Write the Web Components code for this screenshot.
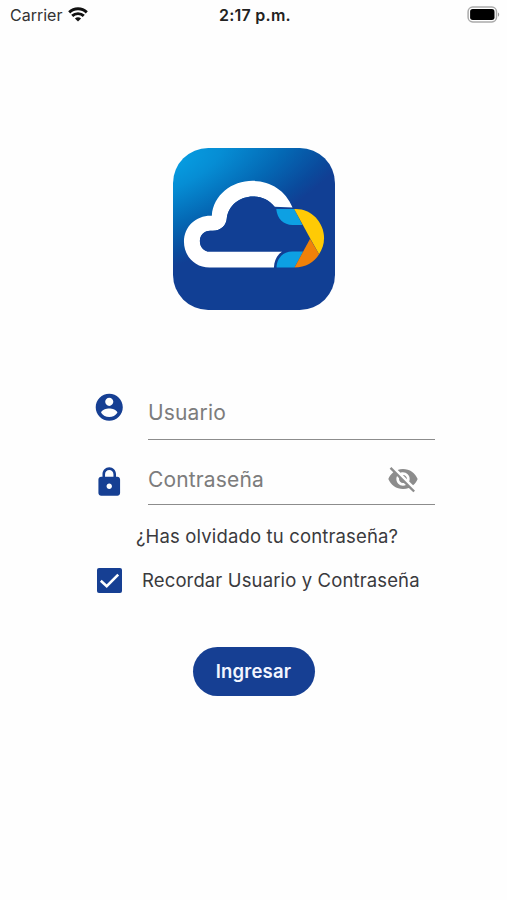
<!DOCTYPE html>
<html lang="es">
<head>
<meta charset="utf-8">
<title>Ingresar</title>
<style>
html,body{margin:0;height:100%;background:#fefefe}
body{font-family:Inter,"Liberation Sans",sans-serif;color:#3a3a3d}
</style>
</head>
<body>
<login-screen></login-screen>
<script>
const define = (name, html) => customElements.define(name, class extends HTMLElement {
  constructor() {
    super();
    this.attachShadow({ mode: 'open' }).innerHTML = html;
  }
});

define('status-bar', `
<style>
:host{display:grid;grid-template-columns:1fr auto 1fr;align-items:center;height:30px;padding:0 7px 0 10px;box-sizing:border-box;color:#222}
.left{display:flex;align-items:center;gap:6px;font-size:16px;letter-spacing:0;color:#333}
.left span,.time{margin-top:-1px}
.left svg{margin-top:-2px}
.time{font-size:16px;font-weight:600;letter-spacing:.25px}
.battery{justify-self:end;display:block;margin-top:-2px}
svg{display:block}
</style>
<div class="left"><span>Carrier</span>
<svg width="20" height="15" viewBox="0 0 20 15" fill="none" stroke="#111" stroke-width="2.9"><path d="M1.2 5.4C6.2.6 13.8.6 18.8 5.4"/><path d="M4.200 8.900C7.400 5.800 12.600 5.800 15.800 8.900"/><path d="M10 14.6 6.9 11.4C8.6 9.9 11.4 9.9 13.1 11.4Z" fill="#111" stroke="none"/></svg></div>
<div class="time">2:17 p.m.</div>
<svg class="battery" width="33" height="17" viewBox="0 0 33 17"><rect x="1.1" y="1.1" width="28.4" height="14.8" rx="4.6" fill="#fff" stroke="#aaa" stroke-width="1.5"/><rect x="3.1" y="3.1" width="24.4" height="10.8" rx="2.6" fill="#000"/><path d="M31 6.5c1.6.6 1.6 3.6 0 4.200Z" fill="#999"/></svg>`);

define('app-logo', `
<style>:host{display:block;width:162px;height:162px}svg{display:block}</style>
<svg width="162" height="162" viewBox="27 24 488 488" preserveAspectRatio="none">
<defs><radialGradient id="g" gradientUnits="userSpaceOnUse" cx="20" cy="70" r="340" gradientTransform="translate(20 70) rotate(-24) scale(2 .86) translate(-20 -70)"><stop offset="0" stop-color="#069ee2"/><stop offset=".25" stop-color="#068dd4"/><stop offset=".6" stop-color="#0468b4"/><stop offset=".88" stop-color="#0a4a9c"/><stop offset="1" stop-color="#113f94"/></radialGradient></defs>
<rect x="27" y="24" width="488" height="488" rx="106" fill="url(#g)"/>
<path fill="#fff" d="M387 203C366 151 320 123 267 123C204 123 148 166 144 228C98 226 60 259 60 306C60 350 93 384 137 384H331C332 363 340 346 356 336H137C120 336 108 322 108 304C108 286 121 273 139 273H147C172 273 188 255 189 236C194 197 228 170 268 170C295 170 317 181 333 201Z"/>
<path fill="#113f94" d="M147 273C172 273 188 255 189 236C194 197 228 170 268 170C295 170 317 181 333 201L338 208C341 238 360 256 387 256H417L440 297 419 336H137C120 336 108 322 108 304C108 286 121 273 139 273Z"/>
<path fill="#0da0e3" d="M338 208H392L417 256H387C360 256 341 238 338 208ZM339 384C340 356 358 336 386 336H419L393 384Z"/>
<path fill="#ffca05" d="M392 208C441 205 482 246 482 296C482 315 476 330 467 344L440 296Z"/>
<path fill="#f08109" d="M440 297 467 344C452 369 426 384 393 384Z"/>
</svg>`);

define('form-field', `
<style>
:host{display:grid;grid-template-columns:28px 287px;column-gap:24px;width:339px}
.icon{align-self:start;display:flex;justify-content:center;padding-top:var(--icon-top,0)}
.line{display:flex;align-items:center;justify-content:space-between;box-sizing:border-box;height:var(--field-height);padding:var(--field-pad,0) 16.500px 0 0;border-bottom:var(--rule,1px) solid #8c8c8c;color:#7c7c7c;font-size:21px;letter-spacing:.150px;white-space:nowrap}
</style>
<div class="icon"><slot name="icon"></slot></div>
<div class="line"><span><slot></slot></span><slot name="action"></slot></div>`);

define('mat-icon', `<style>:host{display:block;flex:none}svg{display:block}</style><svg viewBox="0 0 24 24"><path/></svg>`);

const glyphs = {
  account: 'M12 2C6.480 2 2 6.480 2 12s4.480 10 10 10 10-4.480 10-10S17.520 2 12 2zm0 3c1.660 0 3 1.340 3 3s-1.340 3-3 3-3-1.340-3-3 1.340-3 3-3zm0 14.200c-2.500 0-4.710-1.280-6-3.220.03-1.990 4-3.080 6-3.080 1.990 0 5.970 1.090 6 3.080-1.290 1.940-3.500 3.220-6 3.220z',
  lock: 'M18 8h-1V6c0-2.760-2.240-5-5-5S7 3.240 7 6v2H6c-1.100 0-2 .9-2 2v10c0 1.100.9 2 2 2h12c1.100 0 2-.9 2-2V10c0-1.100-.9-2-2-2zm-6 9c-1.100 0-2-.9-2-2s.9-2 2-2 2 .9 2 2-.9 2-2 2zm3.100-9H8.900V6c0-1.710 1.390-3.100 3.100-3.100 1.710 0 3.100 1.390 3.100 3.100v2z',
  hidden: 'M12 7c2.760 0 5 2.240 5 5 0 .65-.13 1.260-.36 1.830l2.920 2.920c1.510-1.260 2.700-2.890 3.430-4.750-1.730-4.390-6-7.500-11-7.500-1.400 0-2.740.25-3.980.7l2.160 2.160C10.740 7.130 11.350 7 12 7zM2 4.270l2.280 2.280.46.46C3.080 8.300 1.780 10.020 1 12c1.730 4.390 6 7.500 11 7.500 1.550 0 3.030-.3 4.380-.84l.42.42L19.730 22 21 20.730 3.270 3 2 4.270zM7.530 9.800l1.550 1.550c-.05.21-.08.43-.08.65 0 1.660 1.340 3 3 3 .22 0 .44-.03.65-.08l1.550 1.550c-.67.33-1.410.53-2.200.53-2.760 0-5-2.240-5-5 0-.79.2-1.530.53-2.200zm4.310-.78l3.150 3.150.02-.16c0-1.660-1.340-3-3-3l-.17.01z'
};
const paintIcon = el => {
  const svg = el.shadowRoot.querySelector('svg');
  const size = el.getAttribute('size');
  svg.setAttribute('width', size);
  svg.setAttribute('height', size);
  svg.querySelector('path').setAttribute('d', glyphs[el.getAttribute('name')]);
  svg.setAttribute('fill', el.getAttribute('color'));
};

define('check-row', `
<style>
:host{display:flex;align-items:center;gap:20px;font-size:18.500px;letter-spacing:.13px;white-space:nowrap}
svg{display:block;flex:none}
span{margin-top:-2px}
</style>
<svg width="25" height="25" viewBox="0 0 25 25"><rect width="25" height="25" rx="2" fill="#163f93"/><path d="M3.800 12.800 9.700 18.200 21.200 6.600" fill="none" stroke="#fff" stroke-width="2.600"/></svg>
<span><slot></slot></span>`);

define('pill-button', `
<style>
:host{display:block}
button{display:block;width:122px;height:49px;padding:0 0 1px;border:0;border-radius:25px;background:#163f93;color:#f3f6ff;font:600 18.500px Inter,"Liberation Sans",sans-serif;letter-spacing:.2px}
</style>
<button type="button"><slot></slot></button>`);

define('login-screen', `
<style>
:host{display:flex;flex-direction:column;width:507px;height:900px;overflow:hidden;background:#fefefe}
main{display:flex;flex-direction:column;align-items:center;padding-top:118px}
app-logo{margin-left:1px}
.form{width:339px;margin-top:75px;padding-left:24px}
form-field{--field-height:55px;--icon-top:6px;--rule:1px}
form-field.password{--field-height:65px;--field-pad:15px;--icon-top:25.500px}
mat-icon[name=hidden]{margin-top:-2px}
mat-icon[slot=icon]{margin-left:-1px}
.forgot{margin:19px 0 0 40px;font-size:18.500px;line-height:24px;letter-spacing:.15px;white-space:nowrap}
check-row{margin:20px 0 0 1px}
pill-button{margin-top:54px}
</style>
<status-bar></status-bar>
<main>
<app-logo></app-logo>
<div class="form">
<form-field><mat-icon slot="icon" name="account" size="32.500" color="#163f93"></mat-icon>Usuario</form-field>
<form-field class="password"><mat-icon slot="icon" name="lock" size="32.500" color="#163f93"></mat-icon>Contraseña<mat-icon slot="action" name="hidden" size="32" color="#8c8c8c"></mat-icon></form-field>
<div class="forgot">¿Has olvidado tu contraseña?</div>
<check-row>Recordar Usuario y Contraseña</check-row>
</div>
<pill-button>Ingresar</pill-button>
</main>`);

document.querySelector('login-screen').shadowRoot.querySelectorAll('mat-icon').forEach(paintIcon);
</script>
</body>
</html>
